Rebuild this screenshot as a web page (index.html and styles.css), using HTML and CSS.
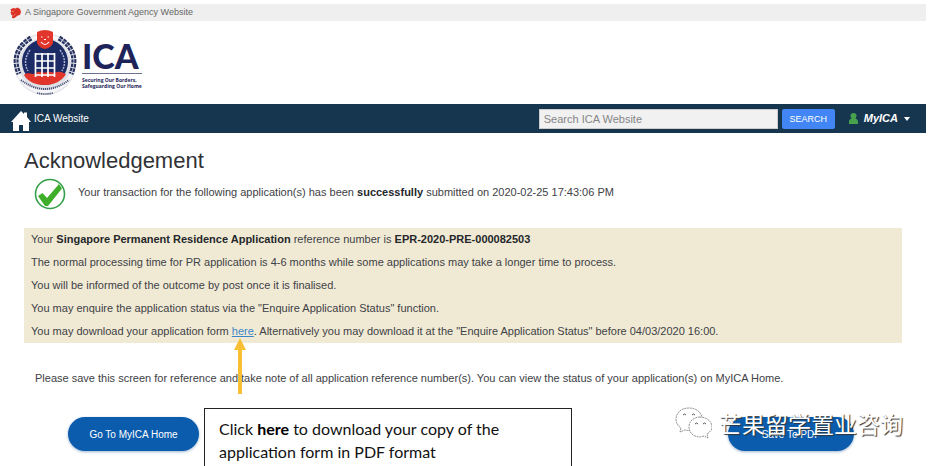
FILE: index.html
```html
<!DOCTYPE html>
<html lang="en">
<head>
<meta charset="utf-8">
<title>Acknowledgement - ICA</title>
<link rel="stylesheet" href="styles.css">
</head>
<body>
<div class="page">
  <div class="gov-bar">
    <svg class="lion" viewBox="0 0 12 12" aria-hidden="true"><path fill="#dc3327" d="M.5 2 4 .6 6 1 8 0l3 1.500 1 3-1 3.400L8 9 6.200 10.500 3.500 12 2 11l.8-2.400L1 8l.5-1L.5 5.600 1.300 4z"/><path stroke="#f4a49b" stroke-width=".7" fill="none" d="M2 4.500 4.500 4M4 9 6 7"/></svg>
    <span>A Singapore Government Agency Website</span>
  </div>
  <header class="brand">
    <svg class="crest" viewBox="0 0 64 66" aria-hidden="true">
      <circle cx="32" cy="34" r="31" fill="#dfe0e6"/>
      <circle cx="32" cy="34" r="28" fill="none" stroke="#f5f5f8" stroke-width="4"/>
      <g fill="none" stroke="#26315f" stroke-width="5" stroke-dasharray="3.500 1">
        <path d="M18 8C3 17 0 30 6 44"/><path d="M46 8C61 17 64 30 58 44"/>
      </g>
      <g fill="none" stroke="#d5d7e2" stroke-width=".8">
        <path d="M18 8C3 17 0 30 6 44"/><path d="M46 8C61 17 64 30 58 44"/>
      </g>
      <circle cx="32" cy="32" r="23" fill="#1c2b66"/>
      <path fill="#e2352b" d="M11 45c5-4 8 1 12-2 5-3 7 1 11-1 5-1 6 2 10 0 4-1 6 1 9 2-4 7-12 11-21 11S15 52 11 45z"/>
      <g fill="none" stroke="#aab1cf" stroke-width="1.500" stroke-dasharray="2 1"><path d="M17 20c-5 7-6 14-2 21"/><path d="M47 20c5 7 6 14 2 21"/></g>
      <path fill="none" stroke="#fff" stroke-width="1.700" d="M22 24h20M22 31h20M22 38h20M22 45h20M22.500 23v24M29 23v24M35 23v24M41.500 23v24"/>
      <path fill="#e2352b" d="M24 2q8-4 16 0v11q-2 5-8 6-6-1-8-6z"/>
      <path fill="none" stroke="#fff" stroke-width="1.200" d="M28 12q4 5 8 0M28 7h1.500M34.500 7H36M31 9.500h2"/>
      <path fill="none" stroke="#4b5278" stroke-width="2" stroke-dasharray="1.200 .8" d="M8 50q24 18 48 0"/>
      <path fill="none" stroke="#4b5278" stroke-width="1.700" stroke-dasharray="1.200 .7" d="M24 63q8 2 16 0"/>
    </svg>
    <div class="wordmark">
      <div class="wordmark-name">ICA</div>
      <div class="tagline">Securing Our Borders,<br>Safeguarding Our Home</div>
    </div>
  </header>
  <nav class="nav">
    <a class="home" href="#">
      <svg viewBox="0 0 20 20" aria-hidden="true"><path fill="#fff" d="M10 0l3 3V1.500h3V6l4 5h-2v9h-6v-6H8v6H2v-9H0z"/></svg>
      <span>ICA Website</span>
    </a>
    <form class="search">
      <input type="search" placeholder="Search ICA Website" aria-label="Search ICA Website">
      <button type="button">SEARCH</button>
    </form>
    <a class="account" href="#">
      <svg class="person" viewBox="0 0 9 11" aria-hidden="true"><path fill="#48a14c" d="M4.500 0C6.500 0 7.500 1 7.500 2.800 7.500 4 6.800 5 6.500 5.500 8 6 9 7 9 8.500V11H0V8.500C0 7 1 6 2.500 5.500 2.200 5 1.500 4 1.500 2.800 1.500 1 2.500 0 4.500 0z"/></svg>
      <span>MyICA</span>
      <svg class="caret" viewBox="0 0 6 4" aria-hidden="true"><path fill="#fff" d="M0 0h6L3 4z"/></svg>
    </a>
  </nav>
  <main class="content">
    <h1>Acknowledgement</h1>
    <div class="status">
      <svg viewBox="0 0 32 32" aria-hidden="true"><circle cx="16" cy="16" r="14.500" fill="#fff" stroke="#35a04a" stroke-width="1.600"/><path fill="#3fae2a" d="M4 18l4.500-3 4.500 5L25 6l3 4.500L14 28h-3z"/></svg>
      <p>Your transaction for the following application(s) has been <strong>successfully</strong> submitted on 2020-02-25 17:43:06 PM</p>
    </div>
    <section class="notice">
      <p>Your <strong>Singapore Permanent Residence Application</strong> reference number is <strong>EPR-2020-PRE-000082503</strong></p>
      <p>The normal processing time for PR application is 4-6 months while some applications may take a longer time to process.</p>
      <p>You will be informed of the outcome by post once it is finalised.</p>
      <p>You may enquire the application status via the "Enquire Application Status" function.</p>
      <p>You may download your application form <span class="anchor"><a href="#">here</a><svg class="arrow" viewBox="0 0 12 56" aria-hidden="true"><path fill="#f9bf35" d="M6 0l6 12H8v44H4V12H0z"/></svg></span>. Alternatively you may download it at the "Enquire Application Status" before 04/03/2020 16:00.</p>
    </section>
    <p class="reminder">Please save this screen for reference and take note of all application reference number(s). You can view the status of your application(s) on MyICA Home.</p>
    <div class="actions">
      <button type="button" class="pill">Go To MyICA Home</button>
      <button type="button" class="pill pill-save">Save To PDF</button>
      <aside class="callout">Click <strong>here</strong> to download your copy of the application form in PDF format</aside>
      <div class="watermark">
        <svg viewBox="0 0 37 32" aria-hidden="true">
          <g fill="#fff" stroke="#777" stroke-width=".8" stroke-dasharray="2 .7"><path d="M14 1C6 1 1 6 1 12c0 4 2 7 5 9l-1 4 5-2c9 2 17-3 17-11C27 6 22 1 14 1z"/><path d="M25 10c-6 0-11 4-11 10s5 10 11 10l4-1 4 2-1-4c3-2 5-4 5-7 0-6-6-10-12-10z"/></g>
          <path fill="none" stroke="#555" d="M8 8q1.500-2 3 0M17 8q1.500-2 3 0M20 17q1.500-2 3 0M28 17q1.500-2 3 0"/>
        </svg>
        <span>芒果留学置业咨询</span>
      </div>
    </div>
  </main>
</div>
</body>
</html>
```
FILE: styles.css
```css
* { box-sizing: border-box; }
html { height: 100%; overflow: hidden; background: #fff; }
body {
  height: 100%;
  margin: 0;
  overflow: hidden;
  color: #3e4145;
  font: 11px/15px "Liberation Sans", Arial, sans-serif;
}
p, h1 { margin: 0; }
button, input { font-family: inherit; }
.page { margin-right: 8px; padding-top: 4px; }

.gov-bar {
  display: flex;
  align-items: center;
  gap: 4px;
  height: 17px;
  padding-left: 10px;
  background: #efefef;
  color: #666;
  font-size: 9px;
}
.lion { width: 11px; height: 12px; }

.brand { display: flex; gap: 5px; height: 83px; padding: 9px 0 0 13px; }
.crest { width: 64px; height: 66px; }
.wordmark { padding-top: 8px; color: #1e2459; }
.wordmark-name {
  border-bottom: 1px solid #6d7191;
  font: 900 34px/35px Lato, sans-serif;
}
.tagline { padding-top: 3px; font: 700 5px/6px "Open Sans", sans-serif; }

.nav {
  display: flex;
  align-items: center;
  height: 29px;
  padding: 0 16px 0 11px;
  background: #163650;
  color: #fff;
}
.nav a { color: inherit; text-decoration: none; }
.home { display: flex; align-items: center; gap: 3px; font-size: 10px; }
.home svg { width: 20px; height: 20px; margin-top: 4px; }
.search { display: flex; gap: 4px; margin-left: auto; }
.search input {
  width: 239px;
  height: 20px;
  padding: 0 4px;
  border: 1px solid #ccc;
  border-radius: 0;
  background: #f1f1f1;
  color: #555;
  font-size: 11px;
}
.search input::placeholder { color: #858585; opacity: 1; }
.search button {
  width: 53px;
  height: 20px;
  padding: 0;
  border: 0;
  border-radius: 2px;
  background: #4285f4;
  color: #fff;
  font-size: 9px;
}
.account {
  display: flex;
  align-items: center;
  gap: 6px;
  margin-left: 14px;
  font: italic 700 11px/15px "Liberation Sans", Arial, sans-serif;
}
.person { width: 9px; height: 11px; }
.caret { width: 6px; height: 4px; }

.content { padding: 15px 24px 0; }
h1 { color: #303236; font: 400 22px/26px "Liberation Sans", Arial, sans-serif; }
.status { display: flex; gap: 12px; margin-top: 4px; padding-left: 10px; }
.status svg { width: 32px; height: 32px; }
.status p { padding-top: 7px; }
strong { color: #25272a; }
.notice { margin-top: 18px; padding: 0 7px; background: #f0ead5; }
.notice p { line-height: 23px; }
.notice a { color: #3d85c6; }
.anchor { position: relative; }
.arrow { position: absolute; top: 13px; left: 2px; width: 12px; height: 56px; }
.reminder { margin-top: 28px; padding-left: 11px; }

.actions {
  position: relative;
  display: flex;
  justify-content: space-between;
  margin-top: 31px;
  padding: 0 48px 0 44px;
}
.pill {
  width: 131px;
  height: 34px;
  border: 0;
  border-radius: 17px;
  background: #0b5cad;
  box-shadow: 0 1px 3px #9cb6d0;
  color: #fff;
  font-size: 10px;
}
.pill-save { width: 126px; }
.callout {
  position: absolute;
  top: -9px;
  left: 180px;
  width: 368px;
  height: 80px;
  padding: 8px 40px 8px 14px;
  border: 1px solid #222;
  background: #fff;
  color: #111;
  font: 16px/23px Lato, sans-serif;
}
.callout strong { color: #000; }
.watermark {
  position: absolute;
  top: -10px;
  right: -1px;
  display: flex;
  align-items: center;
  gap: 7px;
  color: #fff;
  font: 23px/32px "Noto Sans CJK SC", sans-serif;
  text-shadow: 1px 1px 1px #333;
  white-space: nowrap;
}
.watermark svg { width: 37px; height: 32px; }
```
